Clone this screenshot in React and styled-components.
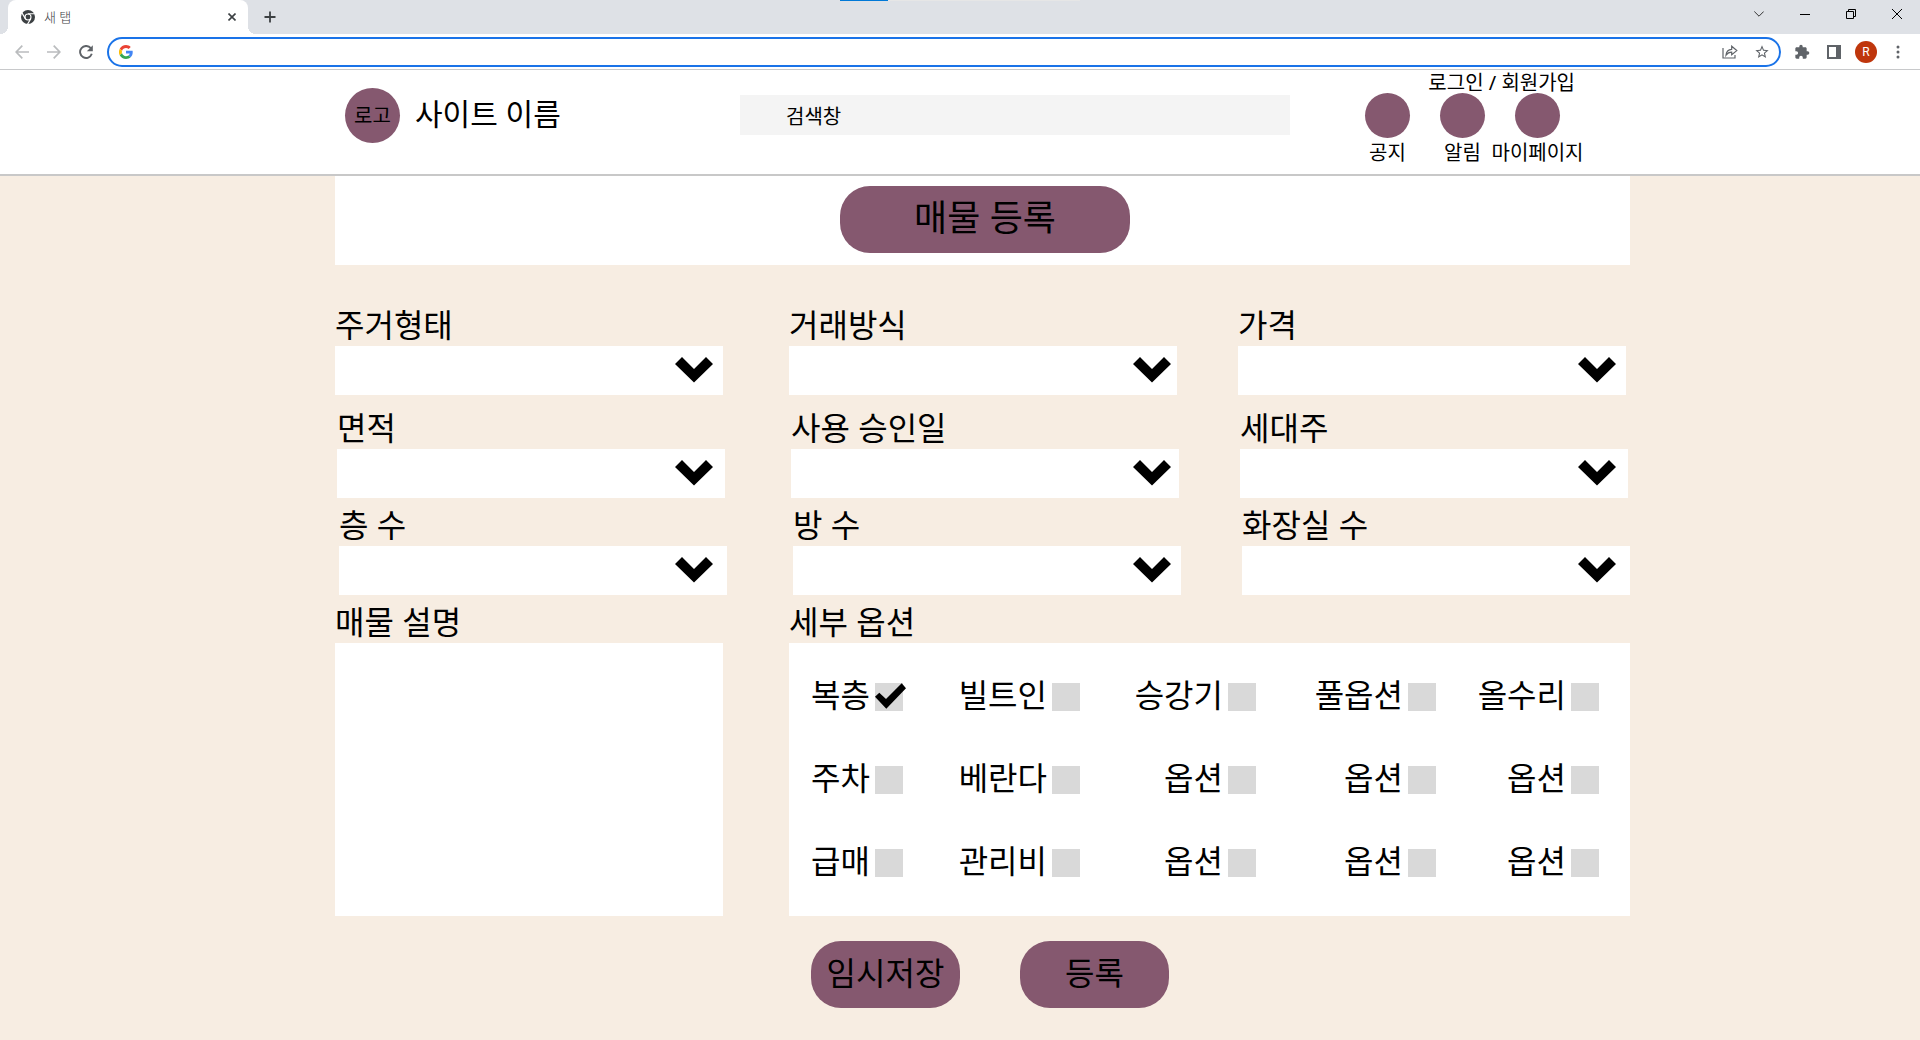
import React from "react";
import styled, { createGlobalStyle } from "styled-components";

const GlobalStyle = createGlobalStyle`
  *, *::before, *::after { box-sizing: border-box; }
  body {
    margin: 0;
    background: #f7ede2;
    color: #000;
    font-family: "Noto Sans", "Noto Sans CJK KR", sans-serif;
    font-size: 20px;
  }
  button, input, select, textarea { font: inherit; color: inherit; }
  button { border: 0; padding: 0; cursor: pointer; }
  svg { display: block; flex: none; }
`;

/* ---------- browser window ---------- */

const TabStrip = styled.div`
  position: relative;
  display: flex;
  align-items: center;
  height: 34px;
  padding-left: 8px;
  background: #dee1e6;
`;

const LoadTrack = styled.div`
  position: absolute;
  top: 0;
  left: 43.75%;
  width: 12.5%;
  height: 1px;
  background: linear-gradient(to right, #0078d7 20%, #e6e6e6 20%);
`;

const Tab = styled.div`
  position: relative;
  display: flex;
  align-items: center;
  align-self: stretch;
  width: 240px;
  padding: 0 8px 0 12px;
  gap: 8px;
  background: #fff;
  border-radius: 8px 8px 0 0;

  &::before, &::after {
    content: "";
    position: absolute;
    bottom: 0;
    width: 8px;
    height: 8px;
  }
  &::before {
    right: 100%;
    background: radial-gradient(circle at 0 0, transparent 8px, #fff 8px);
  }
  &::after {
    left: 100%;
    background: radial-gradient(circle at 100% 0, transparent 8px, #fff 8px);
  }
`;

const TabTitle = styled.span`
  flex: 1;
  font-size: 13px;
  line-height: 16px;
  font-weight: 300;
  color: #3c4043;
`;

const IconButton = styled.button`
  display: grid;
  place-items: center;
  width: ${(p) => p.$width || 32}px;
  height: ${(p) => p.$height || 28}px;
  background: none;
  color: ${(p) => p.$color || "#5f6368"};
`;

const WindowControls = styled.div`
  display: flex;
  align-self: flex-start;
  margin-left: auto;
`;

const Toolbar = styled.div`
  display: flex;
  align-items: center;
  height: 36px;
  padding: 0 6px;
  background: #fff;
  border-bottom: 1px solid #c8c9cb;
`;

const Omnibox = styled.label`
  display: flex;
  align-items: center;
  flex: 1;
  height: 30px;
  margin: 0 5px;
  padding: 0 1px 0 10px;
  border: 2px solid #1a73e8;
  border-radius: 15px;
  background: #fff;
`;

const AddressInput = styled.input`
  flex: 1;
  min-width: 0;
  margin-left: 12px;
  border: 0;
  outline: 0;
  background: none;
  font-size: 14px;
  line-height: 20px;
`;

const Avatar = styled.button`
  width: 22px;
  height: 22px;
  margin: 0 5px;
  border-radius: 50%;
  background: #bf360c;
  color: #fff;
  font-family: Roboto, sans-serif;
  font-size: 12px;
  line-height: 22px;
`;

/* ---------- site header ---------- */

const Header = styled.header`
  display: flex;
  align-items: flex-start;
  height: 106px;
  padding: 0 345px;
  background: #fff;
  border-bottom: 2px solid #c8c8c8;
`;

const Brand = styled.a`
  display: flex;
  align-items: center;
  flex: none;
  gap: 15px;
  width: 395px;
  padding-top: 18px;
  color: inherit;
  text-decoration: none;
`;

const Logo = styled.span`
  width: 55px;
  height: 55px;
  border-radius: 50%;
  background: #85586f;
  line-height: 55px;
  text-align: center;
`;

const SiteName = styled.span`
  padding-bottom: 3px;
  font-size: 30px;
  line-height: 50px;
`;

const SearchInput = styled.input`
  flex: 1;
  min-width: 0;
  height: 40px;
  margin-top: 25px;
  padding: 2px 46px 0;
  border: 0;
  background: #f4f4f4;
  &::placeholder { color: #000; opacity: 1; }
`;

const Account = styled.nav`
  flex: none;
  margin-left: 60px;
`;

const AuthLinks = styled.div`
  height: 23px;
  line-height: 25px;
  text-align: right;
`;

const TextLink = styled.a`
  color: inherit;
  text-decoration: none;
`;

const Shortcuts = styled.div`
  display: flex;
`;

const Shortcut = styled.a`
  display: flex;
  flex-direction: column;
  align-items: center;
  width: 75px;
  color: inherit;
  line-height: 29px;
  text-decoration: none;
  white-space: nowrap;

  &::before {
    content: "";
    width: 45px;
    height: 45px;
    border-radius: 50%;
    background: #85586f;
  }
`;

/* ---------- listing form ---------- */

const Main = styled.main`
  padding: 0 290px 28px 335px;
`;

const TitleBar = styled.div`
  display: flex;
  justify-content: center;
  padding: 10px 0 12px 5px;
  background: #fff;
`;

const PillButton = styled.button`
  width: ${(p) => (p.$large ? 290 : 149)}px;
  height: 67px;
  padding-bottom: 3px;
  border-radius: 30px;
  background: #85586f;
  font-size: ${(p) => (p.$large ? 36 : 32)}px;
  line-height: 64px;
`;

const Form = styled.form`
  display: flex;
  flex-direction: column;
  gap: 8px;
  padding-top: 41px;
`;

const FieldRow = styled.div`
  display: grid;
  grid-template-columns: 1fr 66px 1fr 61px 1fr;
  align-self: ${(p) => p.$align};
  width: calc(100% - 4px);
  padding-bottom: ${(p) => (p.$spaced ? 6 : 0)}px;

  & > :nth-child(2) { grid-column: 3; }
  & > :nth-child(3) { grid-column: 5; }
`;

const DetailRow = styled.div`
  display: grid;
  grid-template-columns: 388fr 841fr;
  column-gap: 66px;
`;

const Group = styled.div`
  display: flex;
  flex-direction: column;
  min-width: 0;
`;

const Caption = styled.label`
  padding-bottom: 2px;
  font-size: 32px;
  line-height: 38px;
`;

const SelectBox = styled.div`
  position: relative;
  height: 49px;
  background: #fff;
`;

const Select = styled.select`
  width: 100%;
  height: 100%;
  padding: 0 56px 0 12px;
  border: 0;
  background: none;
  appearance: none;
`;

const Arrow = styled.svg`
  position: absolute;
  top: 11px;
  right: ${(p) => p.$inset}px;
  pointer-events: none;
`;

const Description = styled.textarea`
  height: 273px;
  padding: 12px;
  border: 0;
  background: #fff;
  resize: none;
`;

const Options = styled.div`
  display: grid;
  grid-template-columns: 114fr 177fr 176fr 180fr 163fr;
  grid-auto-rows: 83px;
  height: 273px;
  padding: 12px 31px 12px 0;
  background: #fff;
`;

const Option = styled.label`
  display: flex;
  align-items: center;
  justify-content: flex-end;
  gap: 5px;
  font-size: 32px;
  line-height: 38px;
  white-space: nowrap;
`;

const OptionName = styled.span`
  padding-bottom: 3px;
`;

const CheckWrap = styled.span`
  position: relative;
  width: 28px;
  height: 28px;
`;

const Checkbox = styled.input`
  display: block;
  width: 28px;
  height: 28px;
  margin: 0;
  background: #d9d9d9;
  appearance: none;

  & + svg {
    position: absolute;
    top: 0;
    left: 0;
    visibility: hidden;
    pointer-events: none;
  }
  &:checked + svg { visibility: visible; }
`;

const Actions = styled.div`
  display: flex;
  justify-content: center;
  gap: 60px;
  padding: 17px 0 0 15px;
`;

const fieldRows = [
  { align: "flex-start", spaced: true, names: ["주거형태", "거래방식", "가격"], insets: [10, 6, 10] },
  { align: "center", names: ["면적", "사용 승인일", "세대주"], insets: [12, 8, 12] },
  { align: "flex-end", names: ["층 수", "방 수", "화장실 수"], insets: [14, 10, 14] },
];

const options = [
  "복층", "빌트인", "승강기", "풀옵션", "올수리",
  "주차", "베란다", "옵션", "옵션", "옵션",
  "급매", "관리비", "옵션", "옵션", "옵션",
];

function Browser() {
  return (
    <>
      <TabStrip>
        <LoadTrack />
        <Tab>
          <svg width="16" height="16" viewBox="0 0 16 16">
            <circle cx="8" cy="8" r="7" fill="#3c4043" />
            <circle cx="8" cy="8" r="3" fill="none" stroke="#fff" strokeWidth="1.1" />
            <path d="M8 4.8h7M5.3 9.6L1.8 3.6M10.8 9.6L7.3 15.6" stroke="#fff" strokeWidth="1.1" />
          </svg>
          <TabTitle>새 탭</TabTitle>
          <IconButton $width={16} $color="#3c4043" aria-label="탭 닫기">
            <svg width="8" height="8" viewBox="0 0 8 8" stroke="currentColor" strokeWidth="1.6">
              <path d="M.5 .5l7 7M7.5 .5l-7 7" />
            </svg>
          </IconButton>
        </Tab>
        <IconButton $width={44} $color="#3c4043" aria-label="새 탭 열기">
          <svg width="12" height="12" viewBox="0 0 12 12" stroke="currentColor" strokeWidth="1.8">
            <path d="M6 .5v11M.5 6h11" />
          </svg>
        </IconButton>
        <WindowControls>
          <IconButton $width={46} $color="#333" aria-label="탭 검색">
            <svg width="10" height="6" viewBox="0 0 10 6" fill="none" stroke="currentColor">
              <path d="M.3 .5L5 5.2 9.7 .5" />
            </svg>
          </IconButton>
          <IconButton $width={46} $color="#000" aria-label="최소화">
            <svg width="10" height="10" viewBox="0 0 10 10" stroke="currentColor">
              <path d="M0 5.5h10" />
            </svg>
          </IconButton>
          <IconButton $width={46} $color="#000" aria-label="이전 크기로">
            <svg width="10" height="10" viewBox="0 0 10 10" fill="none" stroke="currentColor">
              <path d="M.5 2.5h7v7h-7zM2.5 2.5v-2h7v7h-2" />
            </svg>
          </IconButton>
          <IconButton $width={46} $color="#000" aria-label="닫기">
            <svg width="10" height="10" viewBox="0 0 10 10" stroke="currentColor">
              <path d="M0 0l10 10M10 0L0 10" />
            </svg>
          </IconButton>
        </WindowControls>
      </TabStrip>
      <Toolbar>
        <IconButton $color="#babcbe" aria-label="뒤로">
          <svg width="14" height="14" viewBox="0 0 14 14" fill="none" stroke="currentColor" strokeWidth="1.7">
            <path d="M14 7H1.5M7.3 .7L1.2 7l6.1 6.3" />
          </svg>
        </IconButton>
        <IconButton $color="#babcbe" aria-label="앞으로">
          <svg width="14" height="14" viewBox="0 0 14 14" fill="none" stroke="currentColor" strokeWidth="1.7">
            <path d="M0 7h12.5M6.7 .7L12.8 7l-6.1 6.3" />
          </svg>
        </IconButton>
        <IconButton aria-label="새로고침">
          <svg width="14" height="14" viewBox="0 0 14 14">
            <path d="M11.8 3.2A6 6 0 1 0 12.8 8.8" fill="none" stroke="currentColor" strokeWidth="1.9" />
            <path d="M13.8 .3v6H7.8z" fill="currentColor" />
          </svg>
        </IconButton>
        <Omnibox>
          <svg width="14" height="14" viewBox="0 0 48 48">
            <path fill="#EA4335" d="M24 10c3.500 0 6.700 1.200 9.200 3.600l6.900-6.900C35.900 2.400 30.500 0 24 0 14.600 0 6.500 5.400 2.600 13.200l8 6.200C12.400 13.700 17.700 10 24 10z" />
            <path fill="#4285F4" d="M47 24.600c0-1.600-.2-3.100-.4-4.600H24v9h12.900c-.6 3-2.300 5.500-4.800 7.200l7.700 6C44.400 38 47 31.800 47 24.600z" />
            <path fill="#FBBC05" d="M10.500 28.600a14.500 14.500 0 0 1 0-9.200l-8-6.200a24 24 0 0 0 0 21.600z" />
            <path fill="#34A853" d="M24 48c6.500 0 11.900-2.100 15.900-5.800l-7.700-6c-2.200 1.400-4.900 2.300-8.200 2.300-6.300 0-11.600-4.200-13.500-9.900l-8 6.200C6.500 42.600 14.600 48 24 48z" />
          </svg>
          <AddressInput type="text" aria-label="주소창" />
          <IconButton aria-label="공유">
            <svg width="16" height="14" viewBox="0 0 16 14" fill="none" stroke="currentColor" strokeWidth="1.2">
              <path d="M1 3v10h12v-3M4 10.200C4.300 6.500 6.500 4.500 9.700 4.300V1.200L14.800 5.600 9.700 9.800V7.100C7.300 7.100 5.500 8 4 10.200z" />
            </svg>
          </IconButton>
          <IconButton aria-label="북마크">
            <svg width="16" height="16" viewBox="0 0 24 24" fill="currentColor">
              <path d="M22 9.240l-7.190-.62L12 2 9.190 8.630 2 9.240l5.460 4.730L5.820 21 12 17.270 18.180 21l-1.630-7.030L22 9.240zM12 15.400l-3.760 2.270 1-4.280-3.320-2.880 4.380-.38L12 6.100l1.710 4.040 4.380.38-3.320 2.880 1 4.280L12 15.400z" />
            </svg>
          </IconButton>
        </Omnibox>
        <IconButton aria-label="확장 프로그램">
          <svg width="16" height="16" viewBox="0 0 24 24" fill="currentColor">
            <path d="M20.500 11H19V7c0-1.100-.9-2-2-2h-4V3.500a2.500 2.500 0 0 0-5 0V5H4c-1.100 0-2 .9-2 2v3.800h1.500a2.700 2.700 0 0 1 0 5.400H2V20c0 1.100.9 2 2 2h3.800v-1.500a2.700 2.700 0 0 1 5.400 0V22H17c1.100 0 2-.9 2-2v-4h1.500a2.500 2.500 0 0 0 0-5z" />
          </svg>
        </IconButton>
        <IconButton aria-label="측면 패널">
          <svg width="14" height="14" viewBox="0 0 14 14">
            <path d="M1 1h12v12H1z" fill="none" stroke="currentColor" strokeWidth="2" />
            <path d="M9 0h5v14H9z" fill="currentColor" />
          </svg>
        </IconButton>
        <Avatar aria-label="프로필">R</Avatar>
        <IconButton aria-label="메뉴">
          <svg width="4" height="14" viewBox="0 0 4 14" fill="currentColor">
            <circle cx="2" cy="2" r="1.500" />
            <circle cx="2" cy="7" r="1.500" />
            <circle cx="2" cy="12" r="1.500" />
          </svg>
        </IconButton>
      </Toolbar>
    </>
  );
}

export default function App() {
  return (
    <>
      <GlobalStyle />
      <Browser />
      <Header>
        <Brand href="#">
          <Logo>로고</Logo>
          <SiteName>사이트 이름</SiteName>
        </Brand>
        <SearchInput type="search" placeholder="검색창" aria-label="검색창" />
        <Account>
          <AuthLinks>
            <TextLink href="#login">로그인</TextLink> / <TextLink href="#join">회원가입</TextLink>
          </AuthLinks>
          <Shortcuts>
            <Shortcut href="#notice">공지</Shortcut>
            <Shortcut href="#alarm">알림</Shortcut>
            <Shortcut href="#mypage">마이페이지</Shortcut>
          </Shortcuts>
        </Account>
      </Header>
      <Main>
        <TitleBar>
          <PillButton $large type="button">매물 등록</PillButton>
        </TitleBar>
        <Form onSubmit={(e) => e.preventDefault()}>
          {fieldRows.map((row, r) => (
            <FieldRow key={r} $align={row.align} $spaced={row.spaced}>
              {row.names.map((name, c) => (
                <Group key={name}>
                  <Caption htmlFor={`field-${r}-${c}`}>{name}</Caption>
                  <SelectBox>
                    <Select id={`field-${r}-${c}`} defaultValue="">
                      <option value="" />
                    </Select>
                    <Arrow $inset={row.insets[c]} width="38" height="26" viewBox="0 0 38 26">
                      <path d="M7 0L19 12 31 0l7 7-19 18.500L0 7z" />
                    </Arrow>
                  </SelectBox>
                </Group>
              ))}
            </FieldRow>
          ))}
          <DetailRow>
            <Group>
              <Caption htmlFor="description">매물 설명</Caption>
              <Description id="description" />
            </Group>
            <Group role="group" aria-labelledby="options-caption">
              <Caption as="span" id="options-caption">세부 옵션</Caption>
              <Options>
                {options.map((name, i) => (
                  <Option key={i}>
                    <OptionName>{name}</OptionName>
                    <CheckWrap>
                      <Checkbox type="checkbox" defaultChecked={i === 0} />
                      <svg width="32" height="26" viewBox="0 0 32 26">
                        <path d="M0 13.700l4.300-4L11 16 26.700 .300 31 5.300 11.300 25.700z" />
                      </svg>
                    </CheckWrap>
                  </Option>
                ))}
              </Options>
            </Group>
          </DetailRow>
          <Actions>
            <PillButton type="button">임시저장</PillButton>
            <PillButton type="submit">등록</PillButton>
          </Actions>
        </Form>
      </Main>
    </>
  );
}
